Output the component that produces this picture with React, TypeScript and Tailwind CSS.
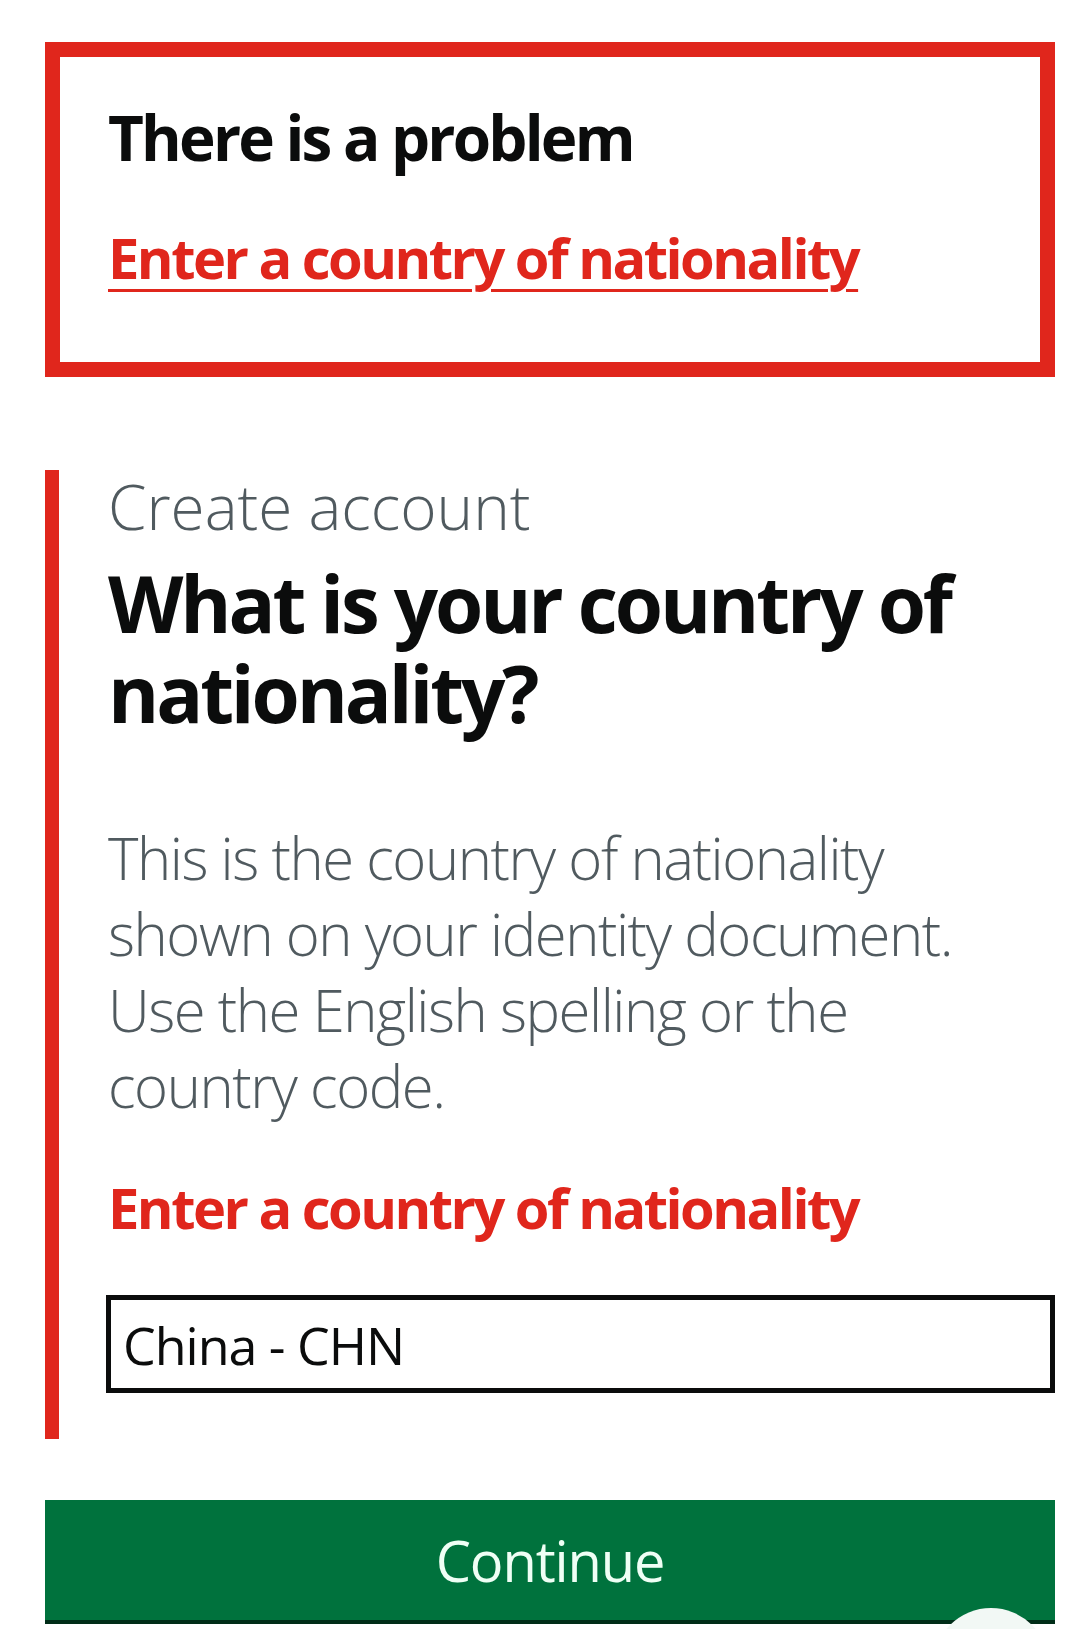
export default function App() {
  return (
    <div className="min-h-screen w-[1080px] bg-white pl-[45px] pr-[25px] pt-[42px] font-['Open_Sans',sans-serif] overflow-hidden">
      {/* Error summary */}
      <div className="border-[15px] border-[#e0261c] px-[48px] pt-[44px] pb-[70px]">
        <h2 className="text-[62px] leading-[72px] font-bold tracking-[-0.045em] text-[#0b0c0c]">
          There is a problem
        </h2>
        <a
          href="#nationality"
          className="mt-[49px] block w-fit text-[56px] leading-[70px] font-bold tracking-[-0.045em] text-[#e0261c] underline decoration-[3px] underline-offset-[10px]"
        >
          Enter a country of nationality
        </a>
      </div>

      {/* Form group with error */}
      <div className="mt-[93px] border-l-[14px] border-[#e0261c] pl-[49px] pb-[46px]">
        <span className="block mt-[2px] text-[62px] leading-[72px] font-light text-[#505a5f]">
          Create account
        </span>
        <h1 className="mt-[16px] text-[78px] leading-[90px] font-bold tracking-[-0.04em] text-[#0b0c0c]">
          What is your country of nationality?
        </h1>
        <p className="mt-[82px] text-[58px] leading-[76px] font-light tracking-[-0.025em] text-[#505a5f] pr-[40px]">
          This is the country of nationality shown on your identity document. Use the English spelling or
          the country code.
        </p>
        <p className="mt-[47px] text-[56px] leading-[72px] font-bold tracking-[-0.045em] text-[#e0261c]">
          Enter a country of nationality
        </p>
        <input
          id="nationality"
          defaultValue="China - CHN"
          className="mt-[52px] -ml-[2px] block w-[calc(100%+2px)] h-[98px] border-[5px] border-[#0b0c0c] px-[12px] text-[52px] tracking-[-0.02em] text-[#0b0c0c] bg-white outline-none font-['Open_Sans',sans-serif]"
        />
      </div>

      {/* Continue button */}
      <div className="relative mt-[61px]">
        <button className="w-full h-[120px] bg-[#00723d] shadow-[0_4px_0_#002d18] text-[56px] tracking-[-0.02em] text-[#effff5] font-['Open_Sans',sans-serif]">
          Continue
        </button>
        <div className="absolute left-[888px] top-[108px] h-[116px] w-[116px] rounded-full bg-[#f2f8f5]" />
      </div>
    </div>
  )
}
